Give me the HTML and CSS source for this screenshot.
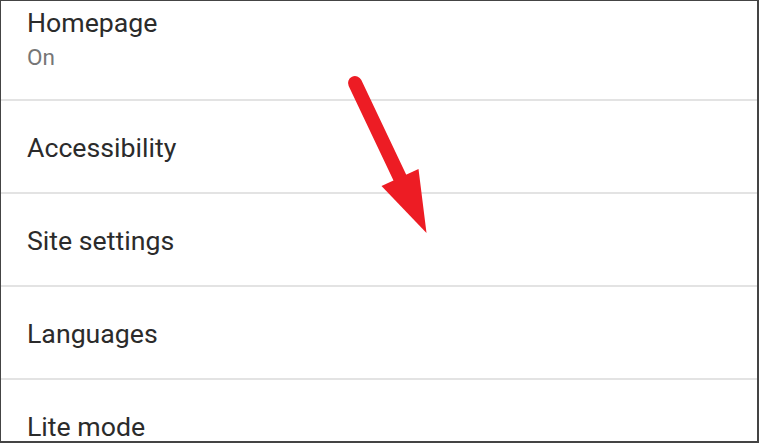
FILE: index.html
```html
<!DOCTYPE html>
<html>
<head>
<meta charset="utf-8">
<link rel="stylesheet" href="styles.css">
</head>
<body>
<div class="frame">
  <div class="list">
    <div class="row row-first">
      <div class="title">Homepage</div>
      <div class="sub">On</div>
    </div>
    <div class="row"><div class="title">Accessibility</div></div>
    <div class="row"><div class="title">Site settings</div></div>
    <div class="row"><div class="title">Languages</div></div>
    <div class="row row-last"><div class="title">Lite mode</div></div>
  </div>
  <svg class="arrow" width="759" height="443" viewBox="0 0 759 443">
    <line x1="355" y1="83" x2="401" y2="180" stroke="#ed1c24" stroke-width="14" stroke-linecap="round"/>
    <polygon points="381.5,186 418.5,169 426.5,233" fill="#ed1c24"/>
  </svg>
</div>
</body>
</html>
```
FILE: styles.css
```css
html, body {
  margin: 0;
  padding: 0;
  background: #ffffff;
}
.frame {
  position: relative;
  width: 759px;
  height: 443px;
  box-sizing: border-box;
  border-style: solid;
  border-color: #444444;
  border-width: 1px 2px 2px 1px;
  overflow: hidden;
  font-family: Roboto, "Noto Sans", sans-serif;
}
.list {
  display: flex;
  flex-direction: column;
}
.row {
  box-sizing: border-box;
  height: 93px;
  padding-left: 26px;
  padding-top: 32px;
  border-bottom: 2px solid #e3e3e3;
}
.row-first {
  height: 100px;
  padding-top: 7px;
}
.row-last {
  border-bottom: none;
  height: 62px;
}
.title {
  font-size: 26.7px;
  line-height: 30px;
  color: #2b2b2b;
}
.sub {
  margin-top: 6px;
  font-size: 22.5px;
  line-height: 26px;
  color: #767676;
}
.arrow {
  position: absolute;
  top: -1px;
  left: -1px;
  pointer-events: none;
}
```
